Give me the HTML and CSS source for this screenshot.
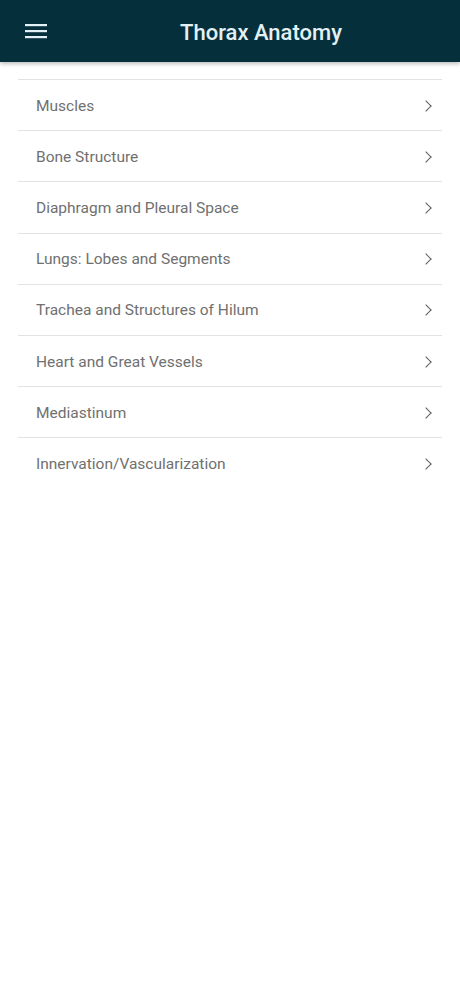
FILE: index.html
```html
<!DOCTYPE html>
<html lang="en">
<head>
    <meta charset="UTF-8">
    <meta name="viewport" content="width=device-width, initial-scale=1.0">
    <title>Thorax Anatomy</title>
    <link rel="stylesheet" href="styles.css">
</head>
<body>
    <header class="app-bar">
        <button class="menu-btn" aria-label="Menu">
            <svg width="22" height="16" viewBox="0 0 22 16">
                <rect x="0" y="1" width="22" height="2.2" fill="#e3f1f4"/>
                <rect x="0" y="7" width="22" height="2.2" fill="#e3f1f4"/>
                <rect x="0" y="13" width="22" height="2.2" fill="#e3f1f4"/>
            </svg>
        </button>
        <h1 class="title">Thorax Anatomy</h1>
    </header>

    <ul class="topic-list">
        <li class="topic"><span>Muscles</span><i class="chev"></i></li>
        <li class="topic"><span>Bone Structure</span><i class="chev"></i></li>
        <li class="topic"><span>Diaphragm and Pleural Space</span><i class="chev"></i></li>
        <li class="topic"><span>Lungs: Lobes and Segments</span><i class="chev"></i></li>
        <li class="topic"><span>Trachea and Structures of Hilum</span><i class="chev"></i></li>
        <li class="topic"><span>Heart and Great Vessels</span><i class="chev"></i></li>
        <li class="topic"><span>Mediastinum</span><i class="chev"></i></li>
        <li class="topic"><span>Innervation/Vascularization</span><i class="chev"></i></li>
    </ul>
</body>
</html>
```

FILE: styles.css
```css
body {
    margin: 0;
    padding: 0;
    font-family: Roboto, "Noto Sans", Arial, sans-serif;
    background-color: #fff;
}

.app-bar {
    height: 62px;
    background-color: #062f3c;
    display: flex;
    align-items: center;
    box-shadow: 0px 2px 4px rgba(0, 0, 0, 0.25);
    position: relative;
}

.menu-btn {
    background: none;
    border: none;
    padding: 0;
    margin-left: 25px;
    width: 22px;
    height: 16px;
    display: flex;
}

.title {
    flex: 1;
    margin: 2px 0 0 0;
    padding-left: 15px;
    text-align: center;
    color: #e3f1f4;
    font-size: 22px;
    font-weight: 500;
}

.topic-list {
    list-style-type: none;
    margin: 17px 18px 0 18px;
    padding: 0;
}

.topic {
    box-sizing: border-box;
    height: 51.2px;
    border-top: 1px solid #e2e2e2;
    display: flex;
    align-items: center;
    justify-content: space-between;
    padding: 1px 12px 0 18px;
    color: #707070;
    font-size: 15.5px;
}

.chev {
    width: 7px;
    height: 7px;
    border-top: 1.7px solid #5e5e5e;
    border-right: 1.7px solid #5e5e5e;
    transform: rotate(45deg);
}
```
